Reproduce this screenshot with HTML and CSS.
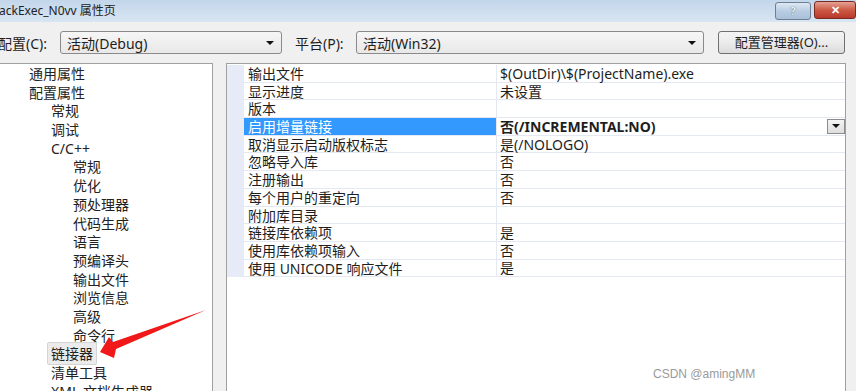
FILE: index.html
```html
<!DOCTYPE html>
<html lang="zh-CN">
<head>
    <meta charset="UTF-8">
    <title>属性页</title>
    <link rel="stylesheet" href="styles.css">
</head>
<body>
    <div class="window">
        <div class="titlebar">
            <span class="title">ackExec_N0vv 属性页</span>
            <div class="caption-buttons">
                <span class="cap-btn cap-help">?</span>
                <span class="cap-btn cap-close">&#x2715;</span>
            </div>
        </div>

        <div class="toolbar">
            <span class="label label-config">配置(C):</span>
            <div class="combo combo-config"><span>活动(Debug)</span><span class="caret"></span></div>
            <span class="label label-platform">平台(P):</span>
            <div class="combo combo-platform"><span>活动(Win32)</span><span class="caret"></span></div>
            <div class="button">配置管理器(O)...</div>
        </div>

        <div class="main">
            <div class="tree">
                <div class="node lv1">通用属性</div>
                <div class="node lv1">配置属性</div>
                <div class="node lv2">常规</div>
                <div class="node lv2">调试</div>
                <div class="node lv2">C/C++</div>
                <div class="node lv3">常规</div>
                <div class="node lv3">优化</div>
                <div class="node lv3">预处理器</div>
                <div class="node lv3">代码生成</div>
                <div class="node lv3">语言</div>
                <div class="node lv3">预编译头</div>
                <div class="node lv3">输出文件</div>
                <div class="node lv3">浏览信息</div>
                <div class="node lv3">高级</div>
                <div class="node lv3">命令行</div>
                <div class="node lv2"><span class="node-selected">链接器</span></div>
                <div class="node lv2">清单工具</div>
                <div class="node lv2">XML 文档生成器</div>
            </div>

            <div class="grid">
                <div class="row"><div class="gutter"></div><div class="name">输出文件</div><div class="value">$(OutDir)\$(ProjectName).exe</div></div>
                <div class="row"><div class="gutter"></div><div class="name">显示进度</div><div class="value">未设置</div></div>
                <div class="row"><div class="gutter"></div><div class="name">版本</div><div class="value"></div></div>
                <div class="row row-active"><div class="gutter"></div><div class="name">启用增量链接</div><div class="value"><b>否(/INCREMENTAL:NO)</b><span class="drop"><span class="caret"></span></span></div></div>
                <div class="row"><div class="gutter"></div><div class="name">取消显示启动版权标志</div><div class="value">是(/NOLOGO)</div></div>
                <div class="row"><div class="gutter"></div><div class="name">忽略导入库</div><div class="value">否</div></div>
                <div class="row"><div class="gutter"></div><div class="name">注册输出</div><div class="value">否</div></div>
                <div class="row"><div class="gutter"></div><div class="name">每个用户的重定向</div><div class="value">否</div></div>
                <div class="row"><div class="gutter"></div><div class="name">附加库目录</div><div class="value"></div></div>
                <div class="row"><div class="gutter"></div><div class="name">链接库依赖项</div><div class="value">是</div></div>
                <div class="row"><div class="gutter"></div><div class="name">使用库依赖项输入</div><div class="value">否</div></div>
                <div class="row"><div class="gutter"></div><div class="name">使用 UNICODE 响应文件</div><div class="value">是</div></div>
            </div>
        </div>

        <!-- annotation drawn over the screenshot -->
        <svg class="arrow" width="856" height="391" viewBox="0 0 856 391">
            <polygon points="100,352 109,337 113,342 206,310 116,349 114,358" fill="#f01818"/>
        </svg>
        <div class="watermark">CSDN @amingMM</div>
    </div>
</body>
</html>
```

FILE: styles.css
```css
body {
    margin: 0;
    font-family: "Noto Sans", "Noto Sans CJK SC", sans-serif;
    font-size: 14px;
    color: #1e1e1e;
}
.window {
    position: relative;
    width: 856px;
    height: 391px;
    overflow: hidden;
    background-color: #f0f0f0;
}
.titlebar {
    height: 22px;
    display: flex;
    justify-content: space-between;
    align-items: flex-start;
    background: linear-gradient(to bottom, #c3d6ea, #d8e5f2);
}
.title {
    font-size: 12px;
    line-height: 22px;
    margin-left: -1px;
    color: #222;
}
.caption-buttons {
    display: flex;
    gap: 3px;
    padding-top: 1px;
}
.cap-btn {
    height: 16px;
    border: 1px solid #6e7f94;
    border-radius: 3px;
    font-size: 11px;
    font-weight: bold;
    line-height: 16px;
    text-align: center;
    color: #fff;
}
.cap-help {
    width: 34px;
    margin-top: 1px;
    background: linear-gradient(to bottom, #dde8f3, #b9cde2 50%, #a9c0d9);
    color: #eef3f8;
    text-shadow: 0 0 1px #333;
}
.cap-close {
    width: 40px;
    border-color: #7a2a22;
    background: linear-gradient(to bottom, #e4a294, #cc5a45 50%, #b8382a);
}
.toolbar {
    height: 41px;
    display: flex;
    align-items: center;
}
.label-config {
    width: 62px;
    margin-left: -2px;
}
.label-platform {
    width: 61px;
    margin-left: 13px;
}
.combo {
    height: 23px;
    box-sizing: border-box;
    border: 1px solid #8a8a8a;
    border-radius: 3px;
    background: linear-gradient(to bottom, #f6f6f6, #e8e8e8);
    display: flex;
    align-items: center;
    justify-content: space-between;
    padding: 0 5px 0 6px;
}
.combo-config {
    width: 222px;
}
.combo-platform {
    width: 348px;
}
.caret {
    width: 0;
    height: 0;
    border-left: 4px solid transparent;
    border-right: 4px solid transparent;
    border-top: 4px solid #111;
    margin-right: 2px;
}
.button {
    margin-left: 14px;
    width: 127px;
    height: 23px;
    box-sizing: border-box;
    border: 1px solid #707070;
    border-radius: 3px;
    background: linear-gradient(to bottom, #f4f4f4, #ebebeb 50%, #dcdcdc);
    text-align: center;
    line-height: 21px;
    font-size: 13px;
}
.main {
    display: flex;
    height: 328px;
    gap: 13px;
}
.tree {
    width: 213px;
    box-sizing: border-box;
    background-color: #fff;
    border-top: 1px solid #a0a0a0;
    border-right: 1px solid #a0a0a0;
    padding-top: 1px;
}
.node {
    height: 18.7px;
    line-height: 18.7px;
    white-space: nowrap;
    color: #222;
}
.lv1 { padding-left: 29px; }
.lv2 { padding-left: 51px; }
.lv3 { padding-left: 73px; }
.node-selected {
    margin-left: -4px;
    padding: 1px 3px;
    background-color: #ebebeb;
    border: 1px solid #d4d4d4;
    border-radius: 2px;
}
.grid {
    width: 620px;
    box-sizing: border-box;
    background-color: #fff;
    border: 1px solid #a0a0a0;
    border-bottom: none;
    padding-top: 1px;
}
.row {
    display: flex;
    height: 17.7px;
    line-height: 17px;
}
.gutter {
    width: 17px;
    background-color: #e7ebf8;
}
.name {
    width: 248px;
    padding-left: 4px;
    border-right: 1px solid #e4e8f3;
    border-bottom: 1px solid #e4e8f3;
    white-space: nowrap;
}
.value {
    flex: 1;
    padding-left: 3px;
    border-bottom: 1px solid #e4e8f3;
    display: flex;
    justify-content: space-between;
    align-items: center;
    white-space: nowrap;
}
.row-active .name {
    background-color: #3399ff;
    color: #fff;
}
.drop {
    width: 18px;
    height: 15px;
    box-sizing: border-box;
    border: 1px solid #8c8c8c;
    background: linear-gradient(to bottom, #f4f4f4, #dedede);
    display: flex;
    align-items: center;
    justify-content: center;
}
.drop .caret {
    margin-right: 0;
}
.arrow {
    position: absolute;
    left: 0;
    top: 0;
    pointer-events: none;
}
.watermark {
    position: absolute;
    left: 653px;
    top: 367px;
    font-family: "Liberation Sans", sans-serif;
    font-size: 12px;
    color: #9a9a9a;
}
```
